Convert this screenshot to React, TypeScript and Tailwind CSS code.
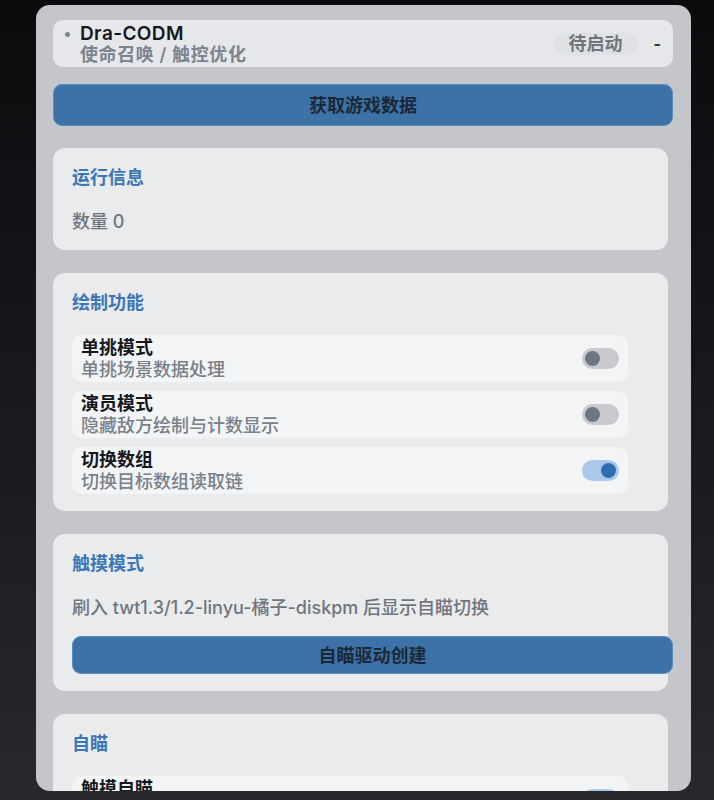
import React from "react";

function Toggle({ on }: { on: boolean }) {
  return (
    <div
      className={
        on
          ? "relative h-[21px] w-[37px] shrink-0 rounded-full bg-[#a9c8ea]"
          : "relative h-[21px] w-[37px] shrink-0 rounded-full bg-[#c8cacd]"
      }
    >
      <div
        className={
          on
            ? "absolute right-[3px] top-[3px] h-[15px] w-[15px] rounded-full bg-[#2f6cb0]"
            : "absolute left-[3px] top-[3px] h-[15px] w-[15px] rounded-full bg-[#6c7785]"
        }
      />
    </div>
  );
}

function Row({ title, sub, on }: { title: string; sub: string; on: boolean }) {
  return (
    <div className="flex h-[47px] w-[556px] items-center justify-between rounded-[10px] bg-[#f3f4f6] pl-[9px] pr-[9px]">
      <div className="flex flex-col">
        <div className="text-[18px] font-bold leading-[22px] text-[#15181c]">{title}</div>
        <div className="text-[18px] font-medium leading-[22px] text-[#788089]">{sub}</div>
      </div>
      <Toggle on={on} />
    </div>
  );
}

function CardTitle({ children }: { children: React.ReactNode }) {
  return <div className="text-[18px] font-bold leading-[24px] text-[#3b77b7]">{children}</div>;
}

export default function App() {
  return (
    <div className="h-[800px] w-full overflow-hidden bg-gradient-to-b from-[#0a0b0d] via-[#18191c] to-[#27292d] pl-[36px] pt-[5px] font-['Inter','Noto_Sans_CJK_SC',sans-serif]">
      <div className="flex h-[786px] w-[655px] flex-col overflow-hidden rounded-[14px] bg-[#c4c6c9] pl-[17px] pt-[15px]">
        {/* Header */}
        <div className="flex h-[47px] w-[620px] shrink-0 items-center rounded-[10px] bg-[#e6e7ea] pl-[12px] pr-[12px]">
          <div className="mb-[18px] h-[5px] w-[5px] shrink-0 rounded-full bg-[#7d838b]" />
          <div className="ml-[10px] flex flex-col">
            <div className="text-[19px] font-semibold leading-[21px] tracking-[0.4px] text-[#15181c]">Dra-CODM</div>
            <div className="text-[18px] font-semibold leading-[21px] tracking-[0.6px] text-[#7b848e]">使命召唤 / 触控优化</div>
          </div>
          <div className="ml-auto flex h-[22px] items-center rounded-full bg-[#dfe1e5] px-[15px] text-[18px] font-semibold text-[#70767e]">
            待启动
          </div>
          <div className="ml-[16px] text-[16px] font-bold text-[#2a2d31]">-</div>
        </div>

        {/* Main button */}
        <div className="mt-[17px] flex h-[42px] w-[620px] shrink-0 items-center justify-center rounded-[9px] border border-[#5b8cc0] bg-[#3c72a8] text-[18px] font-bold text-[#1b2836]">
          获取游戏数据
        </div>

        {/* Card 1 */}
        <div className="mt-[22px] w-[615px] shrink-0 rounded-[12px] bg-[#eaebed] pb-[16px] pl-[19px] pt-[18px]">
          <CardTitle>运行信息</CardTitle>
          <div className="mt-[20px] text-[18px] font-medium leading-[24px] text-[#6f757d]">数量 0</div>
        </div>

        {/* Card 2 */}
        <div className="mt-[23px] w-[615px] shrink-0 rounded-[12px] bg-[#eaebed] pb-[17px] pl-[19px] pt-[18px]">
          <CardTitle>绘制功能</CardTitle>
          <div className="mt-[20px] flex flex-col gap-[9px]">
            <Row title="单挑模式" sub="单挑场景数据处理" on={false} />
            <Row title="演员模式" sub="隐藏敌方绘制与计数显示" on={false} />
            <Row title="切换数组" sub="切换目标数组读取链" on={true} />
          </div>
        </div>

        {/* Card 3 */}
        <div className="mt-[23px] w-[615px] shrink-0 rounded-[12px] bg-[#eaebed] pb-[17px] pl-[19px] pt-[18px]">
          <CardTitle>触摸模式</CardTitle>
          <div className="mt-[20px] text-[18px] font-medium leading-[24px] text-[#6f757d]">
            刷入 twt1.3/1.2-linyu-橘子-diskpm 后显示自瞄切换
          </div>
          <div className="mt-[16px] flex h-[38px] w-[601px] items-center justify-center rounded-[9px] border border-[#5b8cc0] bg-[#3c72a8] text-[18px] font-bold text-[#1b2836]">
            自瞄驱动创建
          </div>
        </div>

        {/* Card 4 */}
        <div className="mt-[23px] w-[615px] shrink-0 rounded-[12px] bg-[#eaebed] pb-[17px] pl-[19px] pt-[18px]">
          <CardTitle>自瞄</CardTitle>
          <div className="mt-[20px] flex flex-col gap-[9px]">
            <Row title="触摸自瞄" sub="触摸模式下自动瞄准" on={true} />
          </div>
        </div>
      </div>
    </div>
  );
}
